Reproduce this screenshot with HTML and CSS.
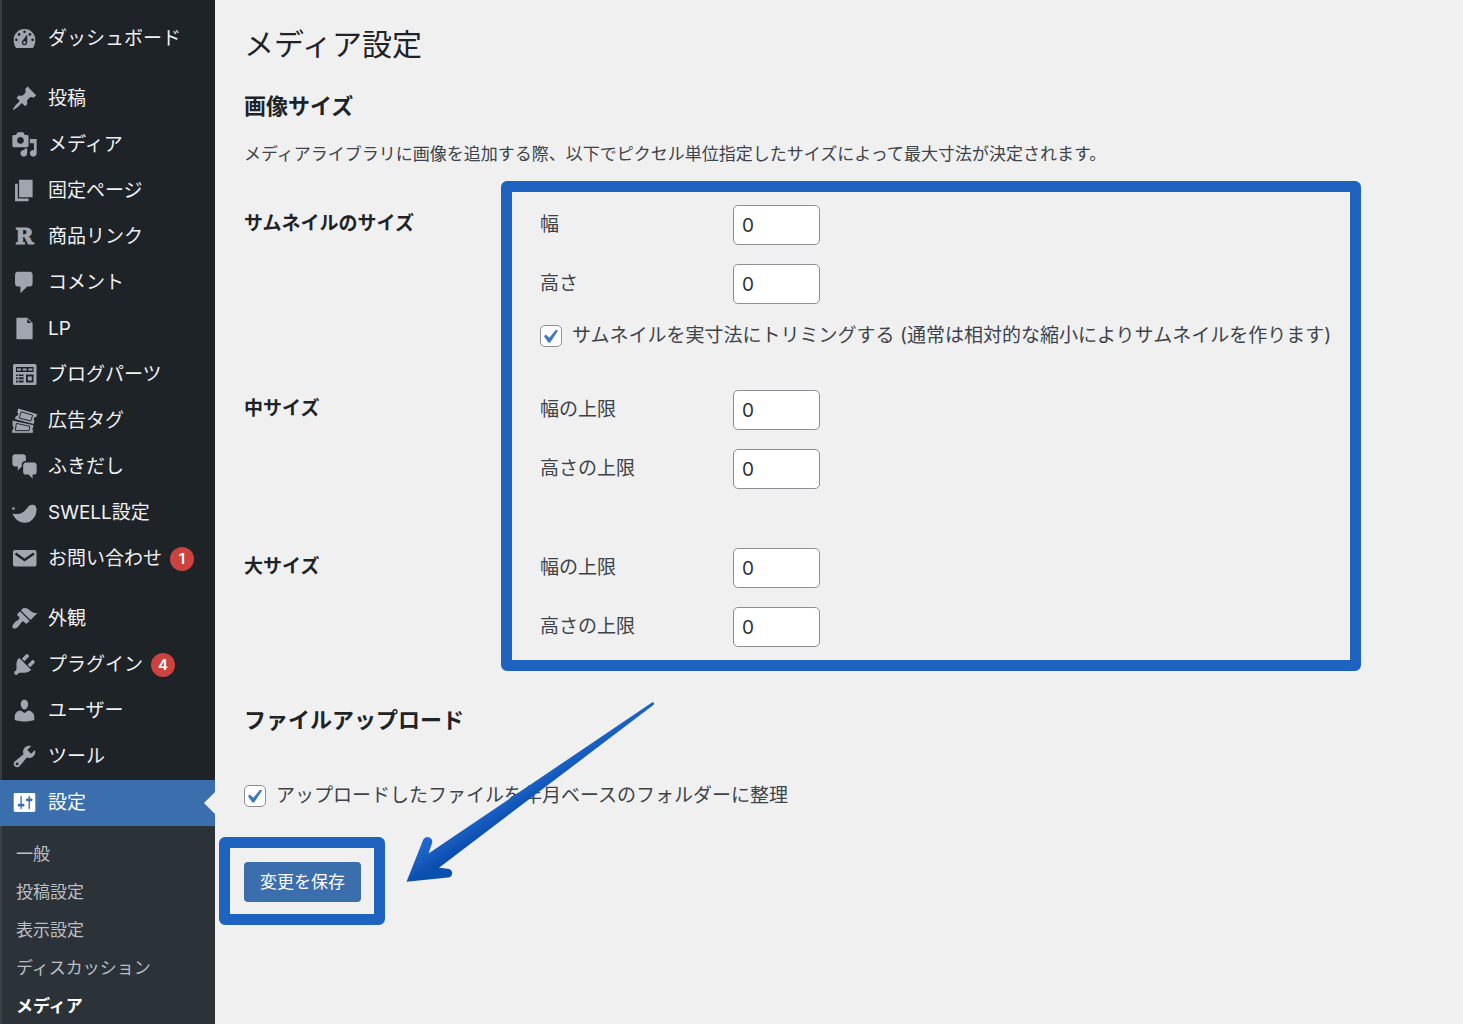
FILE: index.html
```html
<!DOCTYPE html>
<html lang="ja">
<head>
<meta charset="utf-8">
<meta name="viewport" content="width=device-width, initial-scale=1">
<title>メディア設定</title>
<link rel="stylesheet" href="styles.css">
</head>
<body>
<div class="layout">
  <nav class="sidebar" aria-label="メインメニュー">
    <ul class="menu">
      <li><a class="menu-item" href="#"><svg class="icon" viewBox="0 0 20 20"><path d="M3.76 17h12.48c1.34-1.63 1.76-3.57 1.76-6 0-4.42-3.58-8-8-8s-8 3.58-8 8c0 2.43.42 4.37 1.76 6zM10 4c.55 0 1 .45 1 1s-.45 1-1 1-1-.45-1-1 .45-1 1-1zM6 6c.55 0 1 .45 1 1s-.45 1-1 1-1-.45-1-1 .45-1 1-1zm8 0c.55 0 1 .45 1 1s-.45 1-1 1-1-.45-1-1 .45-1 1-1zm-5.37 5.55L12 7v6c0 1.1-.9 2-2 2s-2-.9-2-2c0-.57.24-1.08.63-1.45zM4 10c.55 0 1 .45 1 1s-.45 1-1 1-1-.45-1-1 .45-1 1-1zm12 0c.55 0 1 .45 1 1s-.45 1-1 1-1-.45-1-1 .45-1 1-1zm-5 3c0-.55-.45-1-1-1s-1 .45-1 1 .45 1 1 1 1-.45 1-1z" fill-rule="evenodd"/></svg>ダッシュボード</a></li>
      <li class="group-start"><a class="menu-item" href="#"><svg class="icon" viewBox="0 0 20 20"><path d="M10.44 3.02l1.82-1.82 6.36 6.35-1.83 1.82c-1.05-.68-2.48-.57-3.41.36l-.75.75c-.92.93-1.04 2.35-.35 3.41l-1.83 1.82-2.41-2.41-2.8 2.79c-.42.42-3.38 2.71-3.8 2.29s1.86-3.39 2.28-3.81l2.79-2.79L4.1 9.36l1.83-1.82c1.05.69 2.48.57 3.4-.36l.75-.75c.93-.92 1.05-2.35.36-3.41z"/></svg>投稿</a></li>
      <li><a class="menu-item" href="#"><svg class="icon" viewBox="0 0 20 20"><path fill-rule="evenodd" d="M13 11V4c0-.55-.45-1-1-1h-1.67L9 1H5L3.67 3H2c-.55 0-1 .45-1 1v7c0 .55.45 1 1 1h10c.55 0 1-.45 1-1zM7 4.5c1.38 0 2.5 1.12 2.5 2.5S8.38 9.5 7 9.5 4.5 8.38 4.5 7 5.62 4.5 7 4.5zM14 6h5v10.5c0 1.38-1.12 2.5-2.5 2.5S14 17.88 14 16.5s1.12-2.5 2.5-2.5c.17 0 .34.02.5.05V9h-3V6zm-4 8.05V13h2v3.5c0 1.38-1.12 2.5-2.5 2.5S7 17.88 7 16.5 8.12 14 9.5 14c.17 0 .34.02.5.05z"/></svg>メディア</a></li>
      <li><a class="menu-item" href="#"><svg class="icon" viewBox="0 0 20 20"><path d="M6 15V2h10v13H6zm-1 1h8v2H3V5h2v11z"/></svg>固定ページ</a></li>
      <li><a class="menu-item" href="#"><span class="icon icon-letter" aria-hidden="true">R</span>商品リンク</a></li>
      <li><a class="menu-item" href="#"><svg class="icon" viewBox="0 0 20 20"><path d="M5 2h9c1.1 0 2 .9 2 2v7c0 1.1-.9 2-2 2h-2l-5 5v-5H5c-1.1 0-2-.9-2-2V4c0-1.1.9-2 2-2z"/></svg>コメント</a></li>
      <li><a class="menu-item" href="#"><svg class="icon" viewBox="0 0 20 20"><path fill-rule="evenodd" d="M12 2l4 4v12H4V2h8zm0 4h3l-3-3v3z"/></svg>LP</a></li>
      <li><a class="menu-item" href="#"><svg class="icon" viewBox="0 0 27 27"><path fill-rule="evenodd" d="M3.500 3h20.500a1.500 1.500 0 0 1 1.500 1.500v18a1.500 1.500 0 0 1-1.500 1.500H3.500a1.500 1.500 0 0 1-1.500-1.500v-18A1.500 1.500 0 0 1 3.500 3zM5 6v5h17.500V6zM5 13.500v8h7.500v-8zM15 13.500v8h7.500v-8z"/><path d="M6 7.500h4v2H6zM11.700 7.500h4v2h-4zM17.400 7.500h4v2h-4zM6.700 13.500h1v8h-1zM5 15h7.500v1.300H5zM5 18.200h7.500v1.300H5zM16.800 15.500h4v4h-4z"/></svg>ブログパーツ</a></li>
      <li><a class="menu-item" href="#"><svg class="icon" viewBox="-1 0 28 28"><path d="M6.500 1.500L26.300 7.500 25 10.500a2.200 2.200 0 0 0-1.500 4L22.300 17.500 3 12.500 4 9.500a2.200 2.200 0 0 0 1.500-4z"/><path class="cut" d="M9.500 5L21.500 8.500 19.500 14.500 7.500 11.500z"/><path class="edge" d="M0 13.500L22.800 18.500 22.300 21.500a2.200 2.200 0 0 0 0 3L22 27.300H-.3v-3.500a2.200 2.200 0 0 0 .5-4z"/><path class="cut" d="M4.500 17l14 3-.7 4.500H3.500z"/></svg>広告タグ</a></li>
      <li><a class="menu-item" href="#"><svg class="icon" viewBox="0 0 20 20"><path d="M11 6h-.82C9.070 6 8 7.200 8 8.160V10l-3 3v-3H3c-1.100 0-2-.9-2-2V3c0-1.100.9-2 2-2h6c1.100 0 2 .9 2 2v3zm0 1h6c1.100 0 2 .9 2 2v5c0 1.100-.9 2-2 2h-1v3l-3-3h-2c-1.100 0-2-.9-2-2V9c0-1.100.9-2 2-2z"/></svg>ふきだし</a></li>
      <li><a class="menu-item" href="#"><svg class="icon" viewBox="0 0 27 27"><circle cx="2.400" cy="9.500" r="1.300"/><path d="M1.500 14.500C6 15.800 10.500 15 13.500 12S17.500 6 21 5.700c3.500-.2 5 2.600 4.500 6C24.800 18.500 20 23.800 13.800 23.800 8 23.800 3.500 20 1.500 14.500z"/></svg>SWELL設定</a></li>
      <li><a class="menu-item" href="#"><svg class="icon" viewBox="0 0 27 27"><rect x="2" y="5" width="23.500" height="16.500" rx="2"/><path class="fold" d="M4.500 8.500l9 6.500 9.500-6.500"/></svg>お問い合わせ<span class="badge">1</span></a></li>
      <li class="group-start"><a class="menu-item" href="#"><svg class="icon" viewBox="0 0 20 20"><path d="M14.480 11.060L7.410 3.990l1.500-1.500c.5-.56 2.300-.47 3.510.32 1.210.8 1.430 1.280 2.910 2.100 1.180.64 2.450 1.260 4.450.85zm-.71.71L6.700 4.700 4.930 6.470c-.39.39-.39 1.020 0 1.410l1.060 1.060c.39.39.39 1.030 0 1.420-.6.6-1.430 1.110-2.210 1.690-.35.26-.7.53-1.010.84C1.430 14.230.4 16.080 1.400 17.070c.99 1 2.840-.03 4.180-1.360.31-.31.58-.66.85-1.020.57-.78 1.080-1.610 1.690-2.210.39-.39 1.020-.39 1.410 0l1.060 1.060c.39.39 1.020.39 1.410 0z"/></svg>外観</a></li>
      <li><a class="menu-item" href="#"><svg class="icon" viewBox="0 0 20 20"><path d="M13.110 4.360L9.870 7.600 8 5.730l3.240-3.240c.35-.34 1.050-.2 1.560.32.52.51.66 1.210.31 1.550zm-8 1.770l.91-1.120 9.010 9.010-1.190.84c-.71.71-2.630 1.160-3.820 1.160H6.140L4.900 17.260c-.59.59-1.540.59-2.120 0-.59-.58-.59-1.530 0-2.120l1.240-1.240v-3.880c0-1.130.4-3.190 1.090-3.890zm7.260 3.970l3.240-3.240c.34-.35 1.040-.21 1.550.31.52.51.66 1.210.31 1.550l-3.240 3.250z"/></svg>プラグイン<span class="badge">4</span></a></li>
      <li><a class="menu-item" href="#"><svg class="icon" viewBox="0 0 20 20"><path d="M10 9.250c-2.270 0-2.730-3.440-2.730-3.440C7 4.020 7.820 2 9.970 2c2.160 0 2.980 2.020 2.710 3.810 0 0-.41 3.440-2.680 3.440zm0 2.570L12.720 10c2.390 0 4.520 2.330 4.520 4.530v2.490s-3.650 1.130-7.240 1.130c-3.650 0-7.240-1.130-7.240-1.130v-2.490c0-2.250 1.940-4.480 4.470-4.480z"/></svg>ユーザー</a></li>
      <li><a class="menu-item" href="#"><svg class="icon" viewBox="0 0 20 20"><path fill-rule="evenodd" d="M16.680 9.770c-1.340 1.340-3.300 1.670-4.950.99l-5.410 6.520c-.99.99-2.590.99-3.580 0s-.99-2.590 0-3.570l6.520-5.420c-.68-1.650-.35-3.610.99-4.950 1.280-1.280 3.120-1.620 4.720-1.060l-2.890 2.890 2.820 2.820 2.860-2.870c.53 1.580.18 3.390-1.080 4.650zM3.810 16.210c.4.39 1.040.39 1.430 0 .4-.4.4-1.040 0-1.430-.39-.4-1.030-.4-1.430 0-.39.39-.39 1.030 0 1.430z"/></svg>ツール</a></li>
      <li><a class="menu-item current" href="#"><svg class="icon" viewBox="0 0 20 20"><path fill-rule="evenodd" d="M18 16V4c0-.55-.45-1-1-1H3c-.55 0-1 .45-1 1v12c0 .55.45 1 1 1h14c.55 0 1-.45 1-1zM8 11h1c.55 0 1 .45 1 1s-.45 1-1 1H8v1.500c0 .28-.22.5-.5.5s-.5-.22-.5-.5V13H6c-.55 0-1-.45-1-1s.45-1 1-1h1V5.500c0-.28.22-.5.5-.5s.5.22.5.5V11zm5-2h-1c-.55 0-1-.45-1-1s.45-1 1-1h1V5.500c0-.28.22-.5.5-.5s.5.22.5.5V7h1c.55 0 1 .45 1 1s-.45 1-1 1h-1v5.500c0 .28-.22.5-.5.5s-.5-.22-.5-.5V9z"/></svg>設定</a></li>
    </ul>
    <ul class="submenu">
      <li><a href="#">一般</a></li>
      <li><a href="#">投稿設定</a></li>
      <li><a href="#">表示設定</a></li>
      <li><a href="#">ディスカッション</a></li>
      <li><a class="selected" href="#" aria-current="page">メディア</a></li>
    </ul>
  </nav>

  <main class="content">
    <h1>メディア設定</h1>
    <form>
      <h2>画像サイズ</h2>
      <p class="description">メディアライブラリに画像を追加する際、以下でピクセル単位指定したサイズによって最大寸法が決定されます。</p>

      <div class="sizes">
        <div class="size" role="group" aria-labelledby="thumb">
          <h3 id="thumb">サムネイルのサイズ</h3>
          <div class="fields">
            <div class="field"><label for="thumb-w">幅</label><input class="number" id="thumb-w" type="text" inputmode="numeric" value="0"></div>
            <div class="field"><label for="thumb-h">高さ</label><input class="number" id="thumb-h" type="text" inputmode="numeric" value="0"></div>
            <label class="check"><input type="checkbox" checked>サムネイルを実寸法にトリミングする (通常は相対的な縮小によりサムネイルを作ります)</label>
          </div>
        </div>
        <div class="size" role="group" aria-labelledby="medium">
          <h3 id="medium">中サイズ</h3>
          <div class="fields fields-spaced">
            <div class="field"><label for="medium-w">幅の上限</label><input class="number" id="medium-w" type="text" inputmode="numeric" value="0"></div>
            <div class="field"><label for="medium-h">高さの上限</label><input class="number" id="medium-h" type="text" inputmode="numeric" value="0"></div>
          </div>
        </div>
        <div class="size" role="group" aria-labelledby="large">
          <h3 id="large">大サイズ</h3>
          <div class="fields">
            <div class="field"><label for="large-w">幅の上限</label><input class="number" id="large-w" type="text" inputmode="numeric" value="0"></div>
            <div class="field"><label for="large-h">高さの上限</label><input class="number" id="large-h" type="text" inputmode="numeric" value="0"></div>
          </div>
        </div>
      </div>

      <h2 class="upload-title">ファイルアップロード</h2>
      <label class="check upload-check"><input type="checkbox" checked>アップロードしたファイルを年月ベースのフォルダーに整理</label>

      <div class="submit">
        <button class="save" type="submit">変更を保存</button>
        <svg class="pointer" viewBox="0 0 262 190" aria-hidden="true">
          <defs>
            <linearGradient id="shade" gradientUnits="userSpaceOnUse" x1="125" y1="82" x2="138" y2="102">
              <stop offset="0" stop-color="#2268cc"/>
              <stop offset="1" stop-color="#0b4fb0"/>
            </linearGradient>
          </defs>
          <path fill="url(#shade)" d="M6.500 184.700L23 143.200A4.600 4.600 0 0 1 32 146.200L28.500 156.500 252 5.500Q254.500 4.800 254 7.500L39 170.700 47.500 171.800A4.400 4.400 0 0 1 48 180.600z"/>
        </svg>
      </div>
    </form>
  </main>
</div>
</body>
</html>
```

FILE: styles.css
```css
:root {
  --bg: #f0f0f0;
  --menu: #1d2327;
  --submenu: #2c3338;
  --accent: #3a6eac;
  --frame: #1f63c0;
  --icon: #a1a6ae;
  --text: #3c434a;
  --strong: #1d2327;
}

* {
  box-sizing: border-box;
}

body {
  margin: 0;
  background: var(--bg);
  color: var(--text);
  font: 19px/26px Inter, "Noto Sans CJK JP", sans-serif;
}

ul {
  margin: 0;
  padding: 0;
  list-style: none;
}

a {
  color: inherit;
  text-decoration: none;
}

.layout {
  display: flex;
  min-height: 100vh;
}

/* Sidebar */

.sidebar {
  display: flex;
  flex: 0 0 215px;
  flex-direction: column;
  background: var(--menu);
  box-shadow: inset 2px 0 #353b40;
}

.menu {
  padding-top: 16px;
}

.group-start {
  margin-top: 14px;
}

.menu-item {
  position: relative;
  display: flex;
  align-items: center;
  height: 46px;
  padding-left: 11px;
  color: #f0f0f1;
  line-height: 28px;
}

.icon {
  flex: none;
  width: 27px;
  height: 27px;
  margin: 0 10px 2px 0;
  fill: var(--icon);
}

.icon-letter {
  color: var(--icon);
  font: bold 22px/27px "DejaVu Serif", serif;
  text-align: center;
  -webkit-text-stroke: 1px var(--icon);
}

.icon .cut {
  fill: var(--icon);
  stroke: var(--menu);
  stroke-width: 1;
}

.icon .edge {
  stroke: var(--menu);
  stroke-width: 1;
}

.icon .fold {
  fill: none;
  stroke: var(--menu);
  stroke-width: 2.5;
}

.badge {
  width: 24px;
  height: 24px;
  margin-left: 8px;
  border-radius: 50%;
  background: #ca4340;
  color: #fff;
  font-size: 15px;
  font-weight: 600;
  line-height: 24px;
  text-align: center;
}

.current {
  background: var(--accent);
  color: #fff;
}

.current .icon {
  fill: #fff;
}

.current::after {
  content: "";
  position: absolute;
  top: 12px;
  right: 0;
  border: 11px solid transparent;
  border-left-width: 0;
  border-right-color: var(--bg);
}

.submenu {
  display: flex;
  flex: 1;
  flex-direction: column;
  gap: 2px;
  padding: 10px 0 0 16px;
  background: var(--submenu);
  box-shadow: inset 2px 0 #3a4046;
  color: #bcbfc3;
  font-size: 17px;
  line-height: 36px;
}

.submenu a {
  display: block;
}

.submenu .selected {
  color: #fff;
  font-weight: 700;
}

/* Settings form */

.content {
  flex: 1;
  min-width: 0;
  padding: 25px 29px;
}

h1,
h2,
h3,
p {
  margin: 0;
}

h1,
h2,
h3 {
  color: var(--strong);
}

h1 {
  font-size: 30px;
  font-weight: 400;
  line-height: 38px;
}

h2 {
  margin-top: 28px;
  font-size: 22px;
  font-weight: 700;
  line-height: 30px;
}

h3 {
  font-size: 19px;
  font-weight: 700;
  line-height: 38px;
}

.description {
  margin-top: 19px;
  font-size: 17px;
  line-height: 28px;
}

.sizes {
  position: relative;
  display: grid;
  gap: 41px;
  margin-top: 37px;
}

.size {
  display: grid;
  grid-template-columns: 296px 1fr;
}

.fields {
  display: grid;
  gap: 19px;
}

.fields-spaced {
  padding-bottom: 18px;
}

.field {
  display: grid;
  grid-template-columns: 193px 87px;
  align-items: center;
}

.field label {
  line-height: 28px;
}

.number {
  width: 100%;
  height: 40px;
  padding: 0 8px;
  border: 1px solid #8c8f94;
  border-radius: 5px;
  background: #fff;
  color: #2c3338;
  font: inherit;
}

.check {
  display: flex;
  align-items: center;
  gap: 10px;
}

.check input {
  display: grid;
  flex: none;
  place-items: center;
  width: 22px;
  height: 22px;
  margin: 0;
  appearance: none;
  border: 1px solid #8c8f94;
  border-radius: 5px;
  background: #fff;
}

.check input:checked::before {
  content: "";
  width: 14px;
  height: 13px;
  background: #3f78c0;
  clip-path: polygon(87% 0, 100% 10%, 44% 100%, 31% 100%, 0 51%, 13% 38%, 38% 64%);
}

.upload-title {
  margin-top: 58px;
}

.upload-check {
  margin-top: 48px;
}

.submit {
  position: relative;
  width: fit-content;
  margin-top: 53px;
}

.save {
  display: block;
  height: 40px;
  padding: 0 16px;
  border: 0;
  border-radius: 4px;
  background: var(--accent);
  color: #fff;
  font: inherit;
  font-size: 17px;
}

/* Highlight frames and arrow laid over the form */

.sizes::after,
.submit::after {
  content: "";
  position: absolute;
  border: 11px solid var(--frame);
  border-radius: 6px;
  pointer-events: none;
}

.sizes::after {
  inset: -24px 73px -24px 257px;
}

.submit::after {
  inset: -25px -24px -23px -25px;
}

.pointer {
  position: absolute;
  bottom: 15px;
  left: 156px;
  width: 262px;
  height: 190px;
  pointer-events: none;
}
```
